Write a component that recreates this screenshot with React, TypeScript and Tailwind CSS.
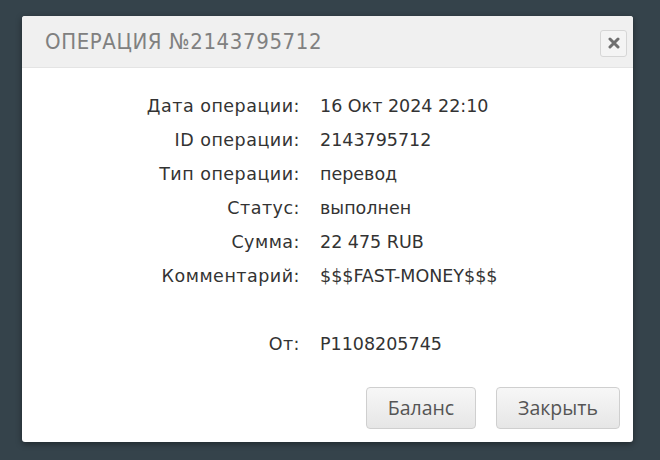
const rows: [string, string][] = [
  ["Дата операции:", "16 Окт 2024 22:10"],
  ["ID операции:", "2143795712"],
  ["Тип операции:", "перевод"],
  ["Статус:", "выполнен"],
  ["Сумма:", "22 475 RUB"],
  ["Комментарий:", "$$$FAST-MONEY$$$"],
];

function Row({ label, value }: { label: string; value: string }) {
  return (
    <div className="flex h-[34px] items-center">
      <div className="w-[298px] shrink-0 pr-[20px] text-right tracking-[0.5px]">{label}</div>
      <div>{value}</div>
    </div>
  );
}

export default function App() {
  return (
    <div className="relative h-[460px] w-[660px] overflow-hidden bg-[#35434b] pt-[16px] pl-[22px]">
      <div className="flex h-[426px] w-[611px] flex-col overflow-hidden rounded-[3px] bg-white shadow-[0_2px_6px_rgba(0,0,0,0.4)]">
        <div className="flex h-[52px] items-center justify-between border-b border-[#e4e4e4] bg-[#f0f0f0] pl-[23px] pr-[6px]">
          <div
            className="text-[22px] tracking-[0.6px] text-[#808080]"
            style={{ fontFamily: '"DejaVu Sans Condensed", "Liberation Sans Narrow", sans-serif' }}
          >
            ОПЕРАЦИЯ №2143795712
          </div>
          <button className="mt-[3px] flex h-[27px] w-[27px] items-center justify-center rounded-[3px] border border-[#d6d6d6] bg-[#f4f4f4]">
            <svg width="12" height="12" viewBox="0 0 12 12">
              <path d="M2 2L10 10M10 2L2 10" stroke="#6f6f6f" strokeWidth="3" strokeLinecap="round" />
            </svg>
          </button>
        </div>
        <div className="flex flex-1 flex-col pt-[21px] text-[#333]">
          <div
            className="flex flex-col text-[17.5px]"
            style={{ fontFamily: '"DejaVu Sans", sans-serif' }}
          >
            {rows.map(([l, v]) => (
              <Row key={l} label={l} value={v} />
            ))}
            <div className="h-[34px]" />
            <Row label="От:" value="P1108205745" />
          </div>
          <div
            className="mt-auto mb-[13px] flex justify-end gap-[20px] pr-[13px]"
            style={{ fontFamily: '"Open Sans", sans-serif' }}
          >
            <button className="h-[42px] w-[110px] rounded-[4px] border border-[#cfcfcf] bg-gradient-to-b from-[#f7f7f7] to-[#e6e6e6] text-[19.5px] text-[#555]">
              Баланс
            </button>
            <button className="h-[42px] w-[124px] rounded-[4px] border border-[#cfcfcf] bg-gradient-to-b from-[#f7f7f7] to-[#e6e6e6] text-[19.5px] text-[#555]">
              Закрыть
            </button>
          </div>
        </div>
      </div>
    </div>
  );
}
